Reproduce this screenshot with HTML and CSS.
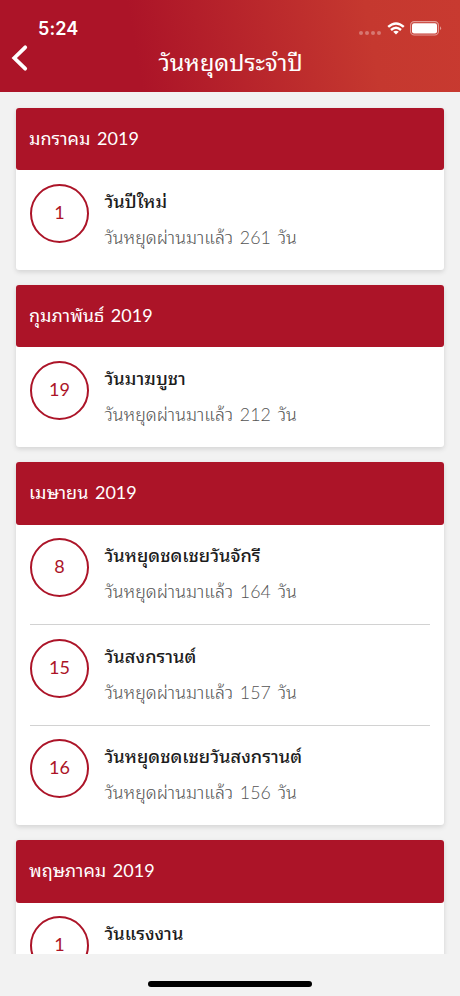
FILE: index.html
```html
<!DOCTYPE html>
<html lang="th">
<head>
<meta charset="utf-8">
<title>วันหยุดประจำปี</title>
<link rel="stylesheet" href="styles.css">
</head>
<body>
<header class="top">
  <div class="status">
    <span class="time">5:24</span>
    <span class="signal"><i></i><i></i><i></i><i></i></span>
    <svg class="wifi" viewBox="0 0 18 13" width="18" height="13"><g fill="none" stroke="#fff" stroke-width="2.4"><path d="M1.2 4.9Q9-2.1 16.8 4.9"/><path d="M4 8Q9 3.5 14 8"/></g><path d="M6.2 9.8Q9 7.6 11.8 9.8L9 12.6z" fill="#fff"/></svg>
    <svg class="battery" viewBox="0 0 32 15" width="32" height="15"><rect x=".6" y=".6" width="27.8" height="13.4" rx="3.6" fill="none" stroke="#fff" stroke-opacity=".5" stroke-width="1.1"/><rect x="2" y="2.2" width="25" height="10.4" rx="2" fill="#fff"/><path d="M30 5.3Q32.2 7.3 30 9.3z" fill="#fff" fill-opacity=".5"/></svg>
  </div>
  <nav class="bar">
    <svg class="back" viewBox="0 0 18 28" width="18" height="28"><path d="M15.2 3.3L4.3 14L15.2 24.7" fill="none" stroke="#fff" stroke-width="3.8" stroke-linecap="round" stroke-linejoin="miter"/></svg>
    <h1 class="title">วันหยุดประจำปี</h1>
  </nav>
</header>
<main class="list">
  <section class="card">
    <h2 class="month">มกราคม 2019</h2>
    <div class="row"><span class="day">1</span><div class="info"><p class="name">วันปีใหม่</p><p class="ago">วันหยุดผ่านมาแล้ว 261 วัน</p></div></div>
  </section>
  <section class="card">
    <h2 class="month">กุมภาพันธ์ 2019</h2>
    <div class="row"><span class="day">19</span><div class="info"><p class="name">วันมาฆบูชา</p><p class="ago">วันหยุดผ่านมาแล้ว 212 วัน</p></div></div>
  </section>
  <section class="card">
    <h2 class="month">เมษายน 2019</h2>
    <div class="row"><span class="day">8</span><div class="info"><p class="name">วันหยุดชดเชยวันจักรี</p><p class="ago">วันหยุดผ่านมาแล้ว 164 วัน</p></div></div>
    <div class="row"><span class="day">15</span><div class="info"><p class="name">วันสงกรานต์</p><p class="ago">วันหยุดผ่านมาแล้ว 157 วัน</p></div></div>
    <div class="row"><span class="day">16</span><div class="info"><p class="name">วันหยุดชดเชยวันสงกรานต์</p><p class="ago">วันหยุดผ่านมาแล้ว 156 วัน</p></div></div>
  </section>
  <section class="card">
    <h2 class="month">พฤษภาคม 2019</h2>
    <div class="row"><span class="day">1</span><div class="info"><p class="name">วันแรงงาน</p></div></div>
  </section>
</main>
<footer class="home"><span class="handle"></span></footer>
</body>
</html>
```
FILE: styles.css
```css
* { box-sizing: border-box; margin: 0; padding: 0; }
body {
  width: 460px; height: 996px; overflow: hidden;
  display: flex; flex-direction: column;
  background: #f2f2f2;
  font-family: Lato, "Noto Sans Thai Looped", "Noto Looped Thai", Sarabun, Laksaman, Loma, Waree, Garuda, Umpush, "Noto Serif Thai", "Noto Sans Thai", sans-serif;
  word-spacing: 2px;
}
.top {
  flex: none; height: 92px; color: #fff;
  background: linear-gradient(80deg, #ac1428 0%, #ac1428 30%, #c5382f 80%, #c83a30 100%);
}
.status { display: flex; align-items: center; height: 44px; padding: 13px 18px 0 38px; }
.time { font: 600 18px/24px Inter, sans-serif; letter-spacing: .1px; flex: 1; }
.signal { display: flex; gap: 2px; margin: 9px 6px 0 0; }
.signal i { width: 4px; height: 4px; border-radius: 2px; background: rgba(255,255,255,.32); }
.wifi { margin-right: 5px; }
.bar { display: flex; align-items: flex-start; height: 30px; padding-left: 10px; }
.back { flex: none; }
.title { flex: 1; font-size: 23.5px; line-height: 36px; font-weight: 400; text-align: center; padding-right: 27px; }
.list { flex: none; height: 862px; overflow: hidden; padding: 15.5px 16px 0; }
.card { background: #fff; border-radius: 3px; margin-bottom: 14.6px; box-shadow: 0 2px 5px rgba(0,0,0,.13); }
.month {
  height: 62.8px; padding-left: 13px; border-radius: 3px;
  background: #ac1428; color: #fff;
  font-size: 18px; font-weight: 400; line-height: 60px;
}
.row { display: flex; height: 99.8px; margin: 0 14px; padding-top: 13.5px; }
.row + .row { border-top: 1.5px solid #d2d2d2; height: 100.5px; }
.day {
  flex: none; width: 59px; height: 59px; margin-right: 15.5px;
  border: 2.5px solid #ac1428; border-radius: 50%;
  color: #ac1428; font-size: 18px; line-height: 53px; text-align: center;
}
.info { white-space: nowrap; margin-top: -1px; }
.name { font-size: 18.2px; line-height: 36px; color: #1c1c1c; font-weight: 500; }
.ago { font-size: 17.8px; line-height: 36px; color: #555; font-weight: 300; }
.home { flex: 1; display: flex; justify-content: center; padding-top: 27px; }
.handle { width: 164px; height: 6px; border-radius: 3px; background: #000; }
```
